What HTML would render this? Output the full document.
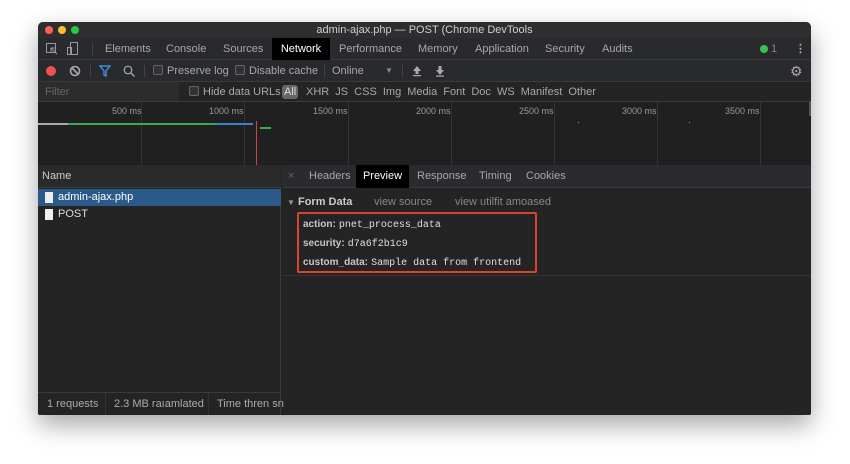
<!DOCTYPE html>
<html><head><meta charset="utf-8"><style>
*{box-sizing:border-box;margin:0;padding:0}
body{width:850px;height:464px;background:#fff;position:relative;overflow:hidden;font-family:"Liberation Sans",sans-serif;font-size:11px;color:#bdbdbd}
.win{position:absolute;left:38px;top:22px;width:773px;height:393px;background:#242424;border-radius:5px 5px 2px 2px;overflow:hidden;box-shadow:0 10px 25px rgba(0,0,0,.35)}
.a{position:absolute;white-space:nowrap}
.title{left:0;top:0;width:773px;height:16px;background:#2e2e2e;text-align:center;line-height:16px;color:#cfcfcf;font-size:11px}
.dot{position:absolute;top:4px;width:8px;height:8px;border-radius:50%}
.bar{left:0;width:773px;background:#292a2d;border-bottom:1px solid #3a3a3a}
.t{position:absolute;top:0;height:22px;line-height:22px;color:#a8a8a8}
.cb{display:inline-block;width:10px;height:10px;border:1px solid #666;border-radius:2px;background:#333;vertical-align:-1px;margin-right:4px}
.vl{position:absolute;top:0;width:1px;background:#333}
.mono{font-family:"Liberation Mono",monospace;color:#e0e0e0;font-size:10px}
.k{color:#c8c8c8;font-weight:bold;font-size:10px}
</style></head><body>
<div class="win">
 <div class="a title">admin-ajax.php — POST (Chrome DevTools
  <div class="dot" style="left:7px;background:#fe5f57"></div>
  <div class="dot" style="left:20px;background:#febc2e"></div>
  <div class="dot" style="left:33px;background:#28c840"></div>
 </div>
 <div class="a bar" style="top:16px;height:22px">
  <svg class="a" style="left:8px;top:5px" width="12" height="12"><rect x="0.5" y="0.5" width="9" height="9" fill="none" stroke="#999"/><path d="M5 5l6 6M5 5v4M5 5h4" stroke="#999"/></svg>
  <svg class="a" style="left:29px;top:4px" width="12" height="14"><rect x="3.5" y="0.5" width="7" height="12" fill="none" stroke="#999"/><rect x="0.5" y="5.5" width="4" height="7" fill="none" stroke="#999"/></svg>
  <div class="vl" style="left:54px;top:5px;height:12px;background:#444"></div>
  <span class="t" style="left:67px">Elements</span>
  <span class="t" style="left:128px">Console</span>
  <span class="t" style="left:185px">Sources</span>
  <span class="t" style="left:234px;width:58px;background:#000;color:#fff;text-align:center">Network</span>
  <span class="t" style="left:301px">Performance</span>
  <span class="t" style="left:380px">Memory</span>
  <span class="t" style="left:437px">Application</span>
  <span class="t" style="left:507px">Security</span>
  <span class="t" style="left:564px">Audits</span>
  <div class="dot" style="left:722px;top:7px;background:#3ac34a"></div>
  <span class="t" style="left:733px;color:#888">1</span>
  <span class="t" style="left:757px;font-weight:bold;color:#aaa">⋮</span>
 </div>
 <div class="a bar" style="top:38px;height:22px">
  <div class="dot" style="left:8px;top:6px;width:10px;height:10px;background:#f0534a"></div>
  <svg class="a" style="left:31px;top:5px" width="12" height="12"><circle cx="6" cy="6" r="4.5" fill="none" stroke="#aaa" stroke-width="1.6"/><path d="M3 3l6 6" stroke="#aaa" stroke-width="1.6"/></svg>
  <div class="vl" style="left:52px;top:5px;height:12px;background:#444"></div>
  <svg class="a" style="left:61px;top:5px" width="12" height="12"><path d="M1 1h10L7 6v5L5 10V6z" fill="none" stroke="#3d8fe0" stroke-width="1.4"/></svg>
  <svg class="a" style="left:85px;top:5px" width="12" height="12"><circle cx="5" cy="5" r="3.8" fill="none" stroke="#aaa" stroke-width="1.2"/><path d="M8 8l3.5 3.5" stroke="#aaa" stroke-width="1.3"/></svg>
  <div class="vl" style="left:106px;top:5px;height:12px;background:#444"></div>
  <span class="t" style="left:115px"><span class="cb"></span>Preserve log</span>
  <span class="t" style="left:197px"><span class="cb"></span>Disable cache</span>
  <div class="vl" style="left:286px;top:5px;height:12px;background:#444"></div>
  <span class="t" style="left:294px">Online</span>
  <span class="t" style="left:347px;font-size:8px;color:#888">▼</span>
  <div class="vl" style="left:364px;top:5px;height:12px;background:#444"></div>
  <svg class="a" style="left:374px;top:5px" width="10" height="12"><path d="M5 1L1 6h2.5v3h3V6H9z" fill="#aaa"/><rect x="1" y="10" width="8" height="1.2" fill="#aaa"/></svg>
  <svg class="a" style="left:397px;top:5px" width="10" height="12"><path d="M5 10L1 5h2.5V1h3v4H9z" fill="#aaa"/><rect x="1" y="10.5" width="8" height="1.2" fill="#aaa"/></svg>
  <span class="t" style="left:752px;color:#aaa;font-size:14px">⚙</span>
 </div>
 <div class="a bar" style="top:60px;height:20px;background:#242424">
  <div class="a" style="left:0;top:0;width:141px;height:19px;background:#2c2c2c"></div>
  <span class="t" style="left:7px;height:20px;line-height:20px;color:#666">Filter</span>
  <span class="t" style="left:151px;height:20px;line-height:20px"><span class="cb"></span>Hide data URLs</span>
  <span class="a" style="left:244px;top:3px;height:14px;line-height:14px;padding:0 2px;background:#666;color:#ddd;border-radius:3px">All</span>
  <span class="t" style="left:268px;height:20px;line-height:20px;word-spacing:3px">XHR JS CSS Img Media Font Doc WS Manifest Other</span>
 </div>
 <div class="a" style="left:0;top:80px;width:773px;height:63px;background:#202020">
  <div class="vl" style="left:103px;height:63px"></div><div class="vl" style="left:206px;height:63px"></div><div class="vl" style="left:310px;height:63px"></div><div class="vl" style="left:413px;height:63px"></div><div class="vl" style="left:516px;height:63px"></div><div class="vl" style="left:619px;height:63px"></div><div class="vl" style="left:722px;height:63px"></div>
  <span class="a" style="left:74px;top:4px;font-size:9px;color:#999">500 ms</span>
  <span class="a" style="left:171px;top:4px;font-size:9px;color:#999">1000 ms</span>
  <span class="a" style="left:275px;top:4px;font-size:9px;color:#999">1500 ms</span>
  <span class="a" style="left:378px;top:4px;font-size:9px;color:#999">2000 ms</span>
  <span class="a" style="left:481px;top:4px;font-size:9px;color:#999">2500 ms</span>
  <span class="a" style="left:584px;top:4px;font-size:9px;color:#999">3000 ms</span>
  <span class="a" style="left:687px;top:4px;font-size:9px;color:#999">3500 ms</span>
  <div class="a" style="left:0;top:21px;width:30px;height:2px;background:#aaa"></div>
  <div class="a" style="left:30px;top:21px;width:147px;height:2px;background:#3aaa55"></div>
  <div class="a" style="left:177px;top:21px;width:38px;height:2px;background:#3b82c8"></div>
  <div class="a" style="left:218px;top:19px;width:1px;height:44px;background:#c44"></div>
  <div class="a" style="left:222px;top:25px;width:11px;height:2px;background:#3aaa55"></div>
  <div class="a" style="left:540px;top:20px;width:1px;height:1px;background:#999"></div>
  <div class="a" style="left:651px;top:20px;width:1px;height:1px;background:#999"></div>
  <div class="a" style="left:771px;top:0;width:2px;height:14px;background:#555"></div>
 </div>
 <div class="a" style="left:0;top:143px;width:243px;height:250px;background:#242424;border-right:1px solid #3a3a3a">
  <div class="a" style="left:0;top:0;width:243px;height:23px;background:#2a2a2a;border-bottom:1px solid #3a3a3a;line-height:23px;padding-left:4px;color:#ccc">Name</div>
  <div class="a" style="left:0;top:24px;width:243px;height:17px;background:#2b5a8a;color:#fff;line-height:17px;padding-left:20px">admin-ajax.php<div class="a" style="left:7px;top:3px;width:8px;height:11px;background:#eee"></div></div>
  <div class="a" style="left:0;top:41px;width:243px;height:17px;color:#ddd;line-height:17px;padding-left:20px">POST<div class="a" style="left:7px;top:3px;width:8px;height:11px;background:#eee"></div></div>
  <div class="a" style="left:0;top:227px;width:243px;height:23px;border-top:1px solid #3a3a3a;line-height:22px;color:#aaa">
   <span class="a" style="left:9px">1 requests</span><div class="vl" style="left:67px;height:23px"></div>
   <span class="a" style="left:76px">2.3 MB raıamlated</span><div class="vl" style="left:170px;height:23px"></div>
   <span class="a" style="left:179px">Time thren sn</span>
  </div>
 </div>
 <div class="a" style="left:244px;top:143px;width:529px;height:23px;background:#2a2b2e;border-bottom:1px solid #3a3a3a">
  <span class="t" style="left:6px;height:23px;line-height:23px;color:#666">×</span>
  <span class="t" style="left:27px;height:23px;line-height:23px">Headers</span>
  <span class="t" style="left:74px;width:53px;height:23px;line-height:23px;background:#000;color:#fff;text-align:center">Preview</span>
  <span class="t" style="left:135px;height:23px;line-height:23px">Response</span>
  <span class="t" style="left:197px;height:23px;line-height:23px">Timing</span>
  <span class="t" style="left:244px;height:23px;line-height:23px">Cookies</span>
 </div>
 <div class="a" style="left:244px;top:166px;width:529px;height:88px;border-bottom:1px solid #333">
  <span class="a" style="left:5px;top:8px;color:#ccc;font-weight:bold"><span style="font-size:8px;color:#999">▼</span> Form Data</span>
  <span class="a" style="left:92px;top:8px;color:#888">view source</span>
  <span class="a" style="left:173px;top:8px;color:#888">view utilfit amoased</span>
  <div class="a" style="left:15px;top:24px;width:240px;height:61px;border:2px solid #d9432f;border-radius:2px"></div>
  <span class="a" style="left:21px;top:30px"><span class="k">action:</span> <span class="mono">pnet_process_data</span></span>
  <span class="a" style="left:21px;top:49px"><span class="k">security:</span> <span class="mono">d7a6f2b1c9</span></span>
  <span class="a" style="left:21px;top:68px"><span class="k">custom_data:</span> <span class="mono">Sample data from frontend</span></span>
 </div>
</div>
</body></html>
